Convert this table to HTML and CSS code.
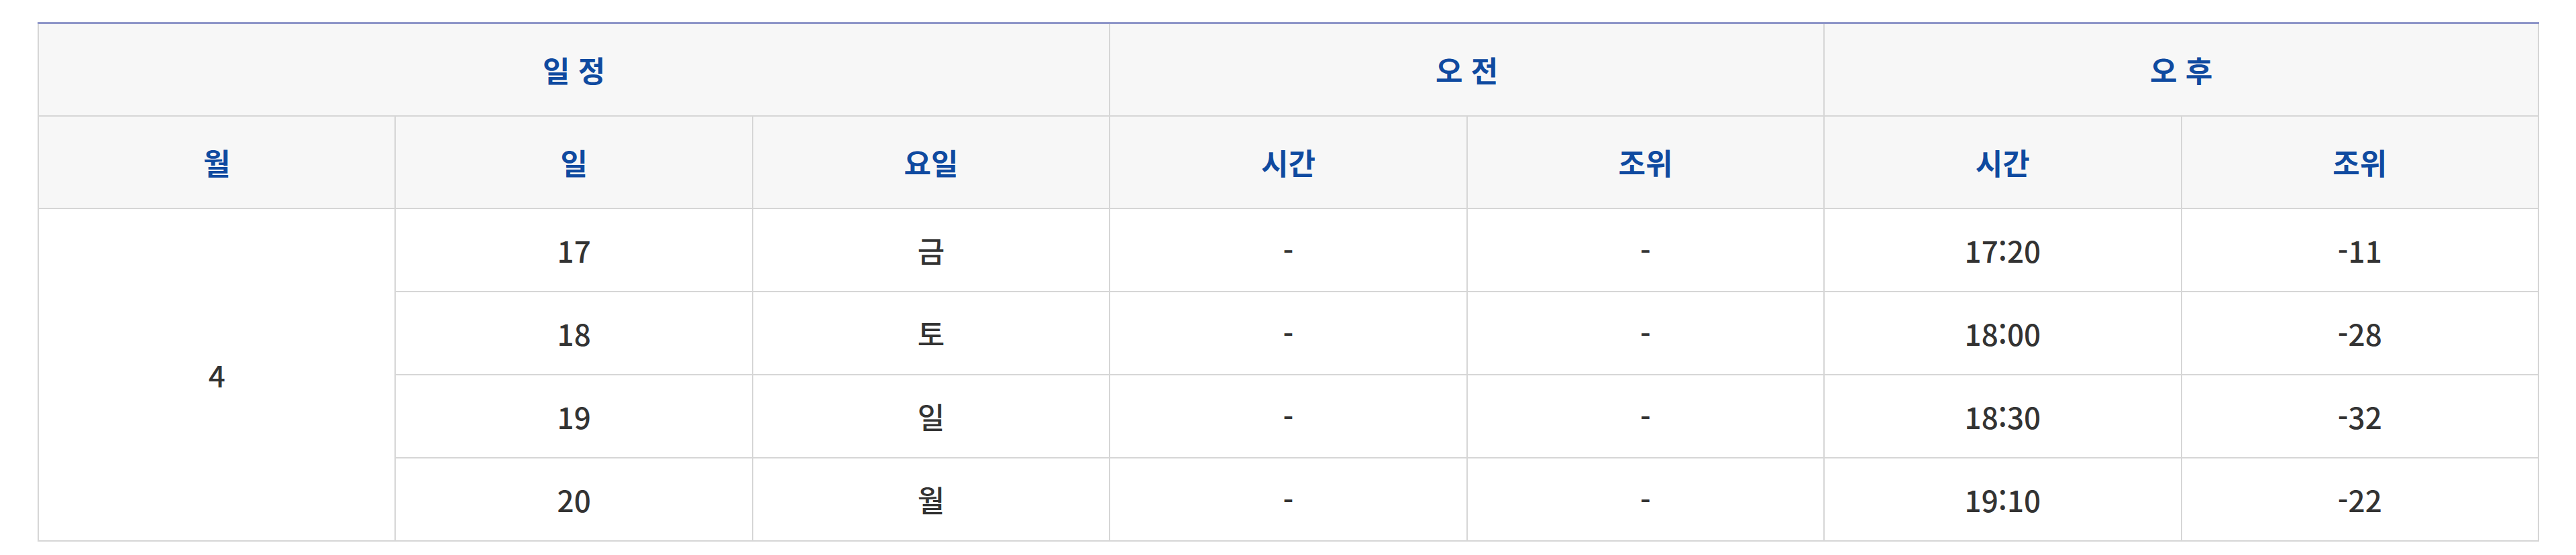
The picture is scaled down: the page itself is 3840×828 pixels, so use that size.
FILE: index.html
```html
<!DOCTYPE html>
<html lang="ko">
<head>
<meta charset="utf-8">
<title>물때표</title>
<link rel="stylesheet" href="styles.css">
</head>
<body>
<div class="wrap">
<table class="tide">
  <thead>
    <tr class="head-top">
      <th colspan="3">일 정</th>
      <th colspan="2">오 전</th>
      <th colspan="2">오 후</th>
    </tr>
    <tr class="head-sub">
      <th>월</th>
      <th>일</th>
      <th>요일</th>
      <th>시간</th>
      <th>조위</th>
      <th>시간</th>
      <th>조위</th>
    </tr>
  </thead>
  <tbody>
    <tr>
      <td rowspan="4">4</td>
      <td>17</td><td>금</td><td>-</td><td>-</td><td>17:20</td><td>-11</td>
    </tr>
    <tr>
      <td>18</td><td>토</td><td>-</td><td>-</td><td>18:00</td><td>-28</td>
    </tr>
    <tr>
      <td>19</td><td>일</td><td>-</td><td>-</td><td>18:30</td><td>-32</td>
    </tr>
    <tr>
      <td>20</td><td>월</td><td>-</td><td>-</td><td>19:10</td><td>-22</td>
    </tr>
  </tbody>
</table>
</div>
</body>
</html>
```

FILE: styles.css
```css
html, body {
  margin: 0;
  padding: 0;
  background: #ffffff;
}

body {
  font-family: "Noto Sans CJK KR", "Noto Sans", sans-serif;
}

.wrap {
  padding: 33px 55px 0 56px;
}

.tide {
  width: 100%;
  border-collapse: collapse;
  table-layout: fixed;
  border-top: 3px solid #8d95c8;
  font-size: 44px;
  line-height: 1.2;
  text-align: center;
}

.tide th,
.tide td {
  border: 2px solid #d6d6d6;
  padding: 0;
  vertical-align: middle;
}

.tide th {
  background: #f7f7f7;
  color: #0f4aa0;
  font-weight: 700;
  height: 136px;
}

.tide .head-top th {
  border-top: 3px solid #8d95c8;
}

.tide td {
  color: #333333;
  font-weight: 500;
  height: 122px;
  background: #ffffff;
}
```
